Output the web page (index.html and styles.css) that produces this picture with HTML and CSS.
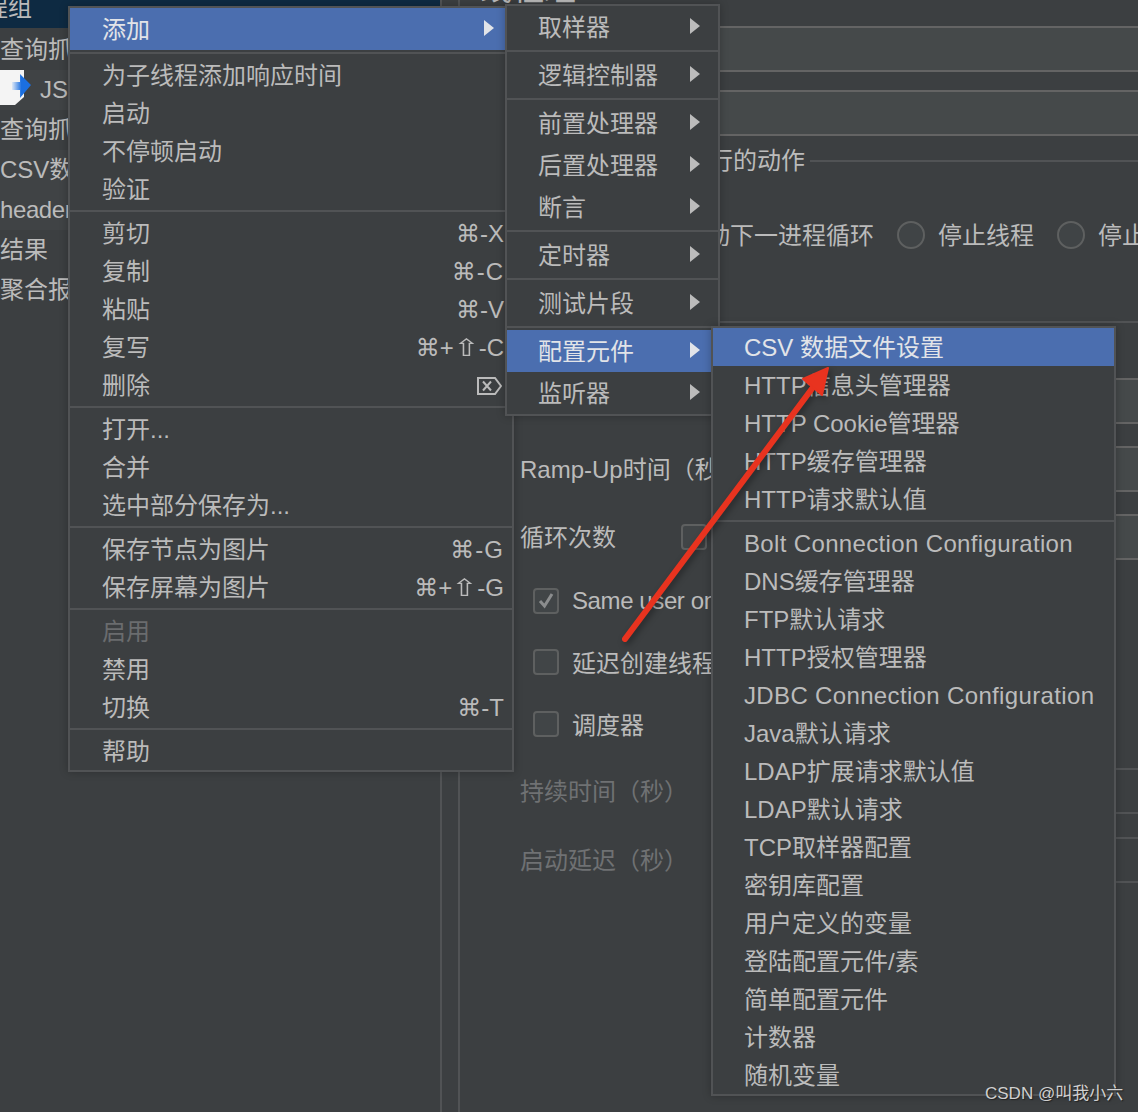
FILE: index.html
```html
<!DOCTYPE html>
<html lang="zh-CN">
<head>
  <meta charset="UTF-8">
  <title>线程组</title>
  <link rel="stylesheet" href="styles.css">
</head>
<body>
  <div class="app">
    <!-- 左侧测试计划树 -->
    <div class="tree">
      <div class="tree-row selected"><span class="group-name">线程组</span></div>
      <div class="tree-row">查询抓包</div>
      <div class="tree-row stripe">
        <svg class="js-icon" width="32" height="40" viewBox="0 0 32 40">
          <defs>
            <linearGradient id="jsArrow" x1="0" x2="1" y1="0" y2="0">
              <stop offset="0" stop-color="#dfe9f7"/>
              <stop offset="0.5" stop-color="#1b6fe0"/>
            </linearGradient>
          </defs>
          <path d="M0 0H24V27L15 35H0Z" fill="#f4f4f4"/>
          <path d="M12 12H20V4L31 15L20 28V20H12Z" fill="url(#jsArrow)"/>
        </svg>
        <span class="js-name">JSR223</span>
      </div>
      <div class="tree-row">查询抓包</div>
      <div class="tree-row stripe">CSV数据文件</div>
      <div class="tree-row stripe tight">header管理器</div>
      <div class="tree-row">结果</div>
      <div class="tree-row">聚合报告</div>
    </div>

    <div class="splitter"></div>

    <!-- 右侧线程组表单 -->
    <div class="content">
      <div class="title">线程组</div>
      <div class="field field-name"></div>
      <div class="field field-comment"></div>

      <div class="legend">
        <span>在取样器错误后要执行的动作</span>
        <span class="legend-line"></span>
      </div>
      <div class="radio-row">
        <span class="radio-label">启动下一进程循环</span>
        <span class="radio"></span>
        <span class="radio-label">停止线程</span>
        <span class="radio"></span>
        <span class="radio-label">停止测试</span>
      </div>
      <div class="divider"></div>

      <div class="form">
        <div class="form-row first">
          <span class="label"></span>
          <div class="field"></div>
        </div>
        <div class="form-row">
          <span class="label">Ramp-Up时间（秒）</span>
          <div class="field"></div>
        </div>
        <div class="form-row">
          <span class="label label-short">循环次数</span>
          <span class="checkbox"></span>
          <span class="spacer"></span>
          <div class="field"></div>
        </div>
        <div class="check-row same-user">
          <span class="checkbox">
            <svg width="22" height="22" viewBox="0 0 22 22"><path d="M5 11L9.500 16L17 4" fill="none" stroke="#8b8d8e" stroke-width="3"/></svg>
          </span>
          <span class="tight">Same user on each iteration</span>
        </div>
        <div class="check-row delay">
          <span class="checkbox"></span>
          <span class="check-text">延迟创建线程直到需要</span>
        </div>
        <div class="check-row scheduler">
          <span class="checkbox"></span>
          <span class="check-text">调度器</span>
        </div>
        <div class="form-row off duration">
          <span class="label">持续时间（秒）</span>
          <div class="field plain"></div>
        </div>
        <div class="form-row off startup">
          <span class="label">启动延迟（秒）</span>
          <div class="field plain"></div>
        </div>
      </div>
    </div>
  </div>

  <!-- 右键菜单 -->
  <div class="menu menu-main">
    <div class="item tall active"><span>添加</span><i class="more"></i></div>
    <div class="sep"></div>
    <div class="item"><span>为子线程添加响应时间</span></div>
    <div class="item"><span>启动</span></div>
    <div class="item"><span>不停顿启动</span></div>
    <div class="item"><span>验证</span></div>
    <div class="sep"></div>
    <div class="item"><span>剪切</span><span class="key">⌘-X</span></div>
    <div class="item"><span>复制</span><span class="key wide">⌘-C</span></div>
    <div class="item"><span>粘贴</span><span class="key">⌘-V</span></div>
    <div class="item"><span>复写</span><span class="key">⌘+<span class="shift">⇧</span>-C</span></div>
    <div class="item">
      <span>删除</span>
      <svg class="del-icon" width="25" height="18" viewBox="0 0 25 18">
        <path d="M1 1H18L24 9L18 17H1Z M6 4.500L14 13.500 M14 4.500L6 13.500" fill="none" stroke="#bbbbbb" stroke-width="2"/>
      </svg>
    </div>
    <div class="sep"></div>
    <div class="item"><span>打开...</span></div>
    <div class="item"><span>合并</span></div>
    <div class="item"><span>选中部分保存为...</span></div>
    <div class="sep"></div>
    <div class="item"><span>保存节点为图片</span><span class="key wide">⌘-G</span></div>
    <div class="item"><span>保存屏幕为图片</span><span class="key">⌘+<span class="shift">⇧</span>-G</span></div>
    <div class="sep"></div>
    <div class="item disabled"><span>启用</span></div>
    <div class="item"><span>禁用</span></div>
    <div class="item"><span>切换</span><span class="key">⌘-T</span></div>
    <div class="sep"></div>
    <div class="item"><span>帮助</span></div>
  </div>

  <div class="menu menu-add">
    <div class="item tall"><span>取样器</span><i class="more"></i></div>
    <div class="sep"></div>
    <div class="item tall"><span>逻辑控制器</span><i class="more"></i></div>
    <div class="sep"></div>
    <div class="item tall"><span>前置处理器</span><i class="more"></i></div>
    <div class="item tall"><span>后置处理器</span><i class="more"></i></div>
    <div class="item tall"><span>断言</span><i class="more"></i></div>
    <div class="sep"></div>
    <div class="item tall"><span>定时器</span><i class="more"></i></div>
    <div class="sep"></div>
    <div class="item tall"><span>测试片段</span><i class="more"></i></div>
    <div class="sep"></div>
    <div class="item tall active"><span>配置元件</span><i class="more"></i></div>
    <div class="item tall"><span>监听器</span><i class="more"></i></div>
  </div>

  <div class="menu menu-config">
    <div class="item active"><span>CSV 数据文件设置</span></div>
    <div class="item"><span>HTTP信息头管理器</span></div>
    <div class="item"><span>HTTP Cookie管理器</span></div>
    <div class="item"><span>HTTP缓存管理器</span></div>
    <div class="item"><span>HTTP请求默认值</span></div>
    <div class="sep"></div>
    <div class="item"><span class="latin">Bolt Connection Configuration</span></div>
    <div class="item"><span>DNS缓存管理器</span></div>
    <div class="item"><span>FTP默认请求</span></div>
    <div class="item"><span>HTTP授权管理器</span></div>
    <div class="item"><span class="latin">JDBC Connection Configuration</span></div>
    <div class="item"><span>Java默认请求</span></div>
    <div class="item"><span>LDAP扩展请求默认值</span></div>
    <div class="item"><span>LDAP默认请求</span></div>
    <div class="item"><span>TCP取样器配置</span></div>
    <div class="item"><span>密钥库配置</span></div>
    <div class="item"><span>用户定义的变量</span></div>
    <div class="item"><span>登陆配置元件/素</span></div>
    <div class="item"><span>简单配置元件</span></div>
    <div class="item"><span>计数器</span></div>
    <div class="item"><span>随机变量</span></div>
  </div>

  <!-- 红色标注箭头 -->
  <svg class="arrow" width="1138" height="1112" viewBox="0 0 1138 1112">
    <path d="M625 639L814 386" fill="none" stroke="#e8331f" stroke-width="6" stroke-linecap="round"/>
    <path d="M828 368L803 379L822 395Z" fill="#e8331f" stroke="#e8331f" stroke-width="2" stroke-linejoin="round"/>
  </svg>

  <div class="watermark">CSDN @叫我小六</div>
</body>
</html>
```

FILE: styles.css
```css
* {
  box-sizing: border-box;
}
html, body {
  margin: 0;
  height: 100%;
}
body {
  position: relative;
  width: 1138px;
  height: 1112px;
  overflow: hidden;
  background: #3c3f41;
  color: #bbbbbb;
  font-family: "Liberation Sans", "Noto Sans CJK SC", sans-serif;
  font-size: 24px;
  line-height: 32px;
}
.app {
  display: flex;
  height: 100%;
}
.latin {
  letter-spacing: 0.35px;
}
.tight {
  letter-spacing: -0.4px;
}

/* 树 */
.tree {
  flex: 0 0 440px;
  overflow: hidden;
}
.tree-row {
  display: flex;
  align-items: center;
  height: 40px;
  background: #3c3f41;
  white-space: nowrap;
}
.tree-row.stripe {
  background: #404345;
}
.tree-row.selected {
  height: 28px;
  margin-bottom: 2px;
  background: #0e2a42;
  align-items: flex-end;
}
.group-name {
  margin-left: -40px;
  margin-bottom: 4px;
}
.js-icon {
  flex: none;
}
.js-name {
  margin-left: 8px;
}
.splitter {
  flex: 0 0 20px;
  border-left: 2px solid #515355;
  border-right: 2px solid #515355;
}

/* 表单 */
.content {
  flex: 1;
  min-width: 0;
  white-space: nowrap;
}
.title {
  height: 32px;
  margin: -27px 0 21px 20px;
  font-size: 32px;
}
.field {
  flex: 1;
  height: 46px;
  background: #45494a;
  border-top: 2px solid #646464;
  border-bottom: 2px solid #646464;
}
.field.plain {
  background: transparent;
  border-color: #515355;
}
.field-comment {
  margin-top: 18px;
}
.legend {
  display: flex;
  align-items: center;
  height: 24px;
  margin: 13px 0 0 33px;
}
.legend-line {
  flex: 1;
  height: 2px;
  margin-left: 5px;
  background: #515355;
}
.radio-row {
  display: flex;
  align-items: center;
  height: 28px;
  margin: 48px 0 0 222px;
}
.radio-label {
  padding-top: 2px;
}
.radio {
  flex: none;
  width: 28px;
  height: 28px;
  margin: 0 13px 0 23px;
  background: #404446;
  border: 2px solid #5e6060;
  border-radius: 50%;
}
.divider {
  height: 2px;
  margin-top: 72px;
  background: #515355;
}
.form {
  padding-left: 60px;
}
.form-row {
  display: flex;
  align-items: center;
  height: 46px;
  margin-top: 22px;
}
.form-row.first {
  margin-top: 55px;
}
.label {
  flex: 0 0 215px;
  padding-top: 2px;
}
.label-short {
  flex-basis: 161px;
}
.spacer {
  flex: 0 0 28px;
}
.checkbox {
  flex: none;
  display: flex;
  align-items: center;
  justify-content: center;
  width: 26px;
  height: 26px;
  background: #414547;
  border: 2px solid #5e6060;
  border-radius: 4px;
}
.check-row {
  display: flex;
  align-items: center;
  gap: 13px;
  height: 28px;
  padding-left: 13px;
}
.check-text {
  padding-top: 3px;
}
.same-user {
  margin-top: 27px;
}
.delay {
  margin-top: 33px;
}
.scheduler {
  margin-top: 34px;
}
.form-row.off {
  color: #6f7173;
}
.duration.form-row {
  margin-top: 30px;
}
.startup.form-row {
  margin-top: 23px;
}

/* 菜单 */
.menu {
  position: absolute;
  background: #3c3f41;
  border: 2px solid #515355;
  box-shadow: 0 0 8px rgba(0, 0, 0, 0.25);
  white-space: nowrap;
}
.menu-main {
  left: 68px;
  top: 6px;
  width: 446px;
}
.menu-add {
  left: 505px;
  top: 4px;
  width: 215px;
}
.menu-config {
  left: 711px;
  top: 326px;
  width: 405px;
}
.item {
  display: flex;
  align-items: center;
  justify-content: space-between;
  height: 38px;
  padding: 2px 10px 0 32px;
}
.menu-add .item,
.menu-config .item {
  padding-left: 31px;
}
.item.tall {
  height: 42px;
}
.item.active {
  background: #4b6eaf;
  color: #e2e4e8;
}
.item.disabled {
  color: #6a6c6e;
}
.sep {
  height: 6px;
  padding: 2px 0;
}
.sep::before {
  content: "";
  display: block;
  height: 2px;
  background: #515355;
}
.more {
  flex: none;
  width: 0;
  height: 0;
  border-left: 10px solid #bbbbbb;
  border-top: 8px solid transparent;
  border-bottom: 8px solid transparent;
  margin-top: -4px;
}
.active .more {
  border-left-color: #e2e4e8;
}
.key {
  font-family: "Liberation Sans", "DejaVu Sans", sans-serif;
}
.key.wide {
  letter-spacing: 1px;
}
.shift {
  display: inline-block;
  width: 25px;
  text-align: center;
  transform: scaleX(1.3);
}
.menu-main .item {
  padding-right: 8px;
}
.menu-main .active {
  padding-right: 18px;
}
.menu-add .item {
  padding-right: 18px;
}
.del-icon {
  flex: none;
  margin-right: 2px;
}

/* 标注 */
.arrow {
  position: absolute;
  left: 0;
  top: 0;
  filter: drop-shadow(2px 3px 3px rgba(0, 0, 0, 0.35));
}
.watermark {
  position: absolute;
  left: 985px;
  top: 1082px;
  font-size: 17px;
  line-height: 24px;
  color: #d0d0d0;
  text-shadow: 1px 1px 1px #222222;
}
```
